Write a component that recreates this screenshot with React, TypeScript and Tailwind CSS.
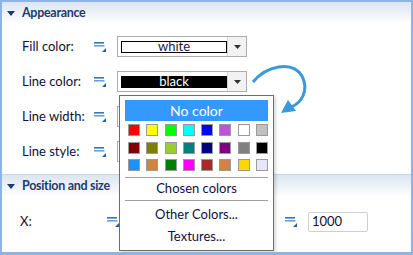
import React from 'react';

const font = { fontFamily: 'Lato, "Noto Sans", sans-serif' };

const colors = [
  '#ff0000', '#ffff00', '#00ff00', '#00ffff', '#0000ff', '#ba55d3', '#ffffff', '#c0c0c0',
  '#800000', '#808000', '#9acd32', '#008080', '#000080', '#800080', '#808080', '#000000',
  '#1e90ff', '#cd853f', '#008000', '#ff00ff', '#a52a2a', '#cd853f', '#ffd700', '#e6e6fa',
];

function BindIcon() {
  return (
    <svg width="12" height="12" viewBox="0 0 12 12" className="shrink-0">
      <rect x="0" y="1" width="10" height="1.6" fill="#2f78c0" />
      <rect x="0" y="4" width="10.5" height="1.6" fill="#6aa3d8" />
      <polygon points="8,11 12,7 12,11" fill="#1f5fa8" />
    </svg>
  );
}

function Combo({ value, dark }: { value?: string; dark?: boolean }) {
  return (
    <div className="flex h-[21px] w-[130px] items-center border border-[#adadad] bg-white pl-[3px]">
      {value !== undefined ? (
        <div
          className={`flex h-[12px] w-[106px] items-center justify-center border border-black text-[13px] leading-none ${
            dark ? 'bg-black text-white' : 'bg-white text-[#1a1a40]'
          }`}
        >
          {value}
        </div>
      ) : (
        <div className="w-[106px]" />
      )}
      <div className="ml-auto flex h-full w-[19px] items-center justify-center border-l border-[#d4d4d4] bg-[#f2f2f2]">
        <svg width="7" height="4" viewBox="0 0 7 4">
          <polygon points="0,0 7,0 3.5,4" fill="#333" />
        </svg>
      </div>
    </div>
  );
}

function Row({ label, value, dark }: { label: string; value?: string; dark?: boolean }) {
  return (
    <div className="flex h-[35px] items-center pl-[20px]">
      <span className="w-[72px] text-[13px] text-[#101030]">{label}</span>
      <BindIcon />
      <div className="ml-[11px]">
        <Combo value={value} dark={dark} />
      </div>
    </div>
  );
}

function Header({ title }: { title: string }) {
  return (
    <div className="flex h-[22px] items-center bg-gradient-to-b from-[#dbe5f1] to-white pl-[5px]">
      <svg width="8" height="5" viewBox="0 0 8 5" className="mr-[7px]">
        <polygon points="0,0 8,0 4,5" fill="#1f3b6e" />
      </svg>
      <span className="text-[12.5px] font-bold tracking-[-0.3px] text-[#1f3b6e]">{title}</span>
    </div>
  );
}

export default function App() {
  return (
    <div style={font} className="relative h-[255px] w-[413px] overflow-hidden border-x-2 border-b-[3px] border-t-2 border-[#8fb3e3] bg-white">
      <Header title="Appearance" />
      <div className="pt-[5px]">
        <Row label="Fill color:" value="white" />
        <Row label="Line color:" value="black" dark />
        <Row label="Line width:" />
        <Row label="Line style:" />
      </div>
      <div className="mt-[5px] border-t border-[#c9d5e4]">
        <Header title="Position and size" />
      </div>
      <div className="flex h-[50px] items-center pl-[18px]">
        <span className="w-[87px] text-[13px] text-[#101030]">X:</span>
        <BindIcon />
        <div className="ml-auto flex items-center pr-[43px]">
          <BindIcon />
          <div className="ml-[11px] flex h-[20px] w-[60px] items-center rounded-[2px] border border-[#cfcfcf] pl-[3px] text-[13px] text-[#101030]">
            1000
          </div>
        </div>
      </div>

      <div className="absolute left-[117px] top-[93px] flex h-[156px] w-[155px] flex-col border border-[#6d6d6d] bg-white px-[5px] pt-[4px] shadow-[2px_2px_3px_rgba(0,0,0,0.15)]">
        <div className="flex h-[21px] items-center justify-center bg-[#3399ff] text-[14px] text-white">No color</div>
        <div className="mt-[3px] grid grid-cols-8 gap-x-[6px] gap-y-[5.5px] pl-[3px]">
          {colors.map((c, i) => (
            <div key={i} className="h-[12px] w-[12px] border border-[#9a9a9a]" style={{ backgroundColor: c }} />
          ))}
        </div>
        <div className="mt-[6px] border-t border-[#a0a0a0]" />
        <div className="flex h-[22px] items-center justify-center text-[13px] text-[#101040]">Chosen colors</div>
        <div className="border-t border-[#a0a0a0]" />
        <div className="flex h-[27px] items-center justify-center text-[13px] text-[#101040]">Other Colors...</div>
        <div className="flex h-[18px] items-center justify-center text-[13px] text-[#101040]">Textures...</div>
      </div>

      <svg className="absolute left-0 top-0" width="413" height="255" viewBox="-2 -2 413 255">
        <path d="M249 78 C 262 62, 288 56, 298 72 C 305 86, 298 99, 287 103" fill="none" stroke="#3a9ad9" strokeWidth="3" />
        <polygon points="277,109 284,96 292,107" fill="#3a9ad9" />
      </svg>
    </div>
  );
}
